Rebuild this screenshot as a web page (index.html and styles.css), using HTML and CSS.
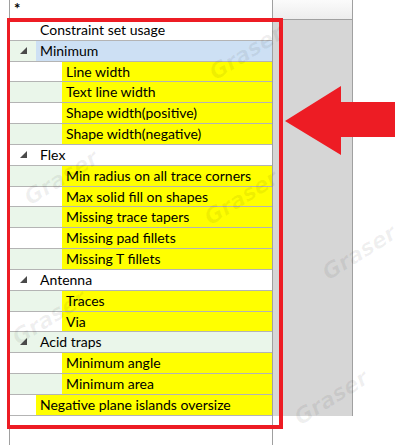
FILE: index.html
```html
<!DOCTYPE html>
<html lang="en">
<head>
  <meta charset="UTF-8">
  <title>Constraint set usage</title>
  <link rel="stylesheet" href="styles.css">
</head>
<body>
  <div class="screen">
    <div class="tree">
      <div class="tree-head">*</div>
      <div class="row"><div class="exp"></div><div class="label">Constraint set usage</div></div>
      <div class="row alt"><div class="exp"><svg class="tri" width="7" height="7"><polygon points="0,7 7,7 7,0"/></svg></div><div class="label sel">Minimum</div></div>
      <div class="row"><div class="exp"></div><div class="indent"></div><div class="label hl">Line width</div></div>
      <div class="row alt"><div class="exp"></div><div class="indent"></div><div class="label hl">Text line width</div></div>
      <div class="row"><div class="exp"></div><div class="indent"></div><div class="label hl">Shape width(positive)</div></div>
      <div class="row alt"><div class="exp"></div><div class="indent"></div><div class="label hl">Shape width(negative)</div></div>
      <div class="row"><div class="exp"><svg class="tri" width="7" height="7"><polygon points="0,7 7,7 7,0"/></svg></div><div class="label">Flex</div></div>
      <div class="row alt"><div class="exp"></div><div class="indent"></div><div class="label hl">Min radius on all trace corners</div></div>
      <div class="row"><div class="exp"></div><div class="indent"></div><div class="label hl">Max solid fill on shapes</div></div>
      <div class="row alt"><div class="exp"></div><div class="indent"></div><div class="label hl">Missing trace tapers</div></div>
      <div class="row"><div class="exp"></div><div class="indent"></div><div class="label hl">Missing pad fillets</div></div>
      <div class="row alt"><div class="exp"></div><div class="indent"></div><div class="label hl">Missing T fillets</div></div>
      <div class="row"><div class="exp"><svg class="tri" width="7" height="7"><polygon points="0,7 7,7 7,0"/></svg></div><div class="label">Antenna</div></div>
      <div class="row alt"><div class="exp"></div><div class="indent"></div><div class="label hl">Traces</div></div>
      <div class="row"><div class="exp"></div><div class="indent"></div><div class="label hl">Via</div></div>
      <div class="row alt"><div class="exp"><svg class="tri" width="7" height="7"><polygon points="0,7 7,7 7,0"/></svg></div><div class="label">Acid traps</div></div>
      <div class="row"><div class="exp"></div><div class="indent"></div><div class="label hl">Minimum angle</div></div>
      <div class="row alt"><div class="exp"></div><div class="indent"></div><div class="label hl">Minimum area</div></div>
      <div class="row"><div class="exp"></div><div class="label hl">Negative plane islands oversize</div></div>
    </div>
    <div class="side">
      <div class="side-head"></div>
      <div class="side-body"></div>
    </div>

    <!-- annotation overlays -->
    <div class="mark-box"></div>
    <svg class="mark-arrow" width="112" height="72" viewBox="284 85 112 72">
      <polygon points="285,121 341,86 341,102 395,102 395,137 341,137 341,155"/>
    </svg>

    <span class="wm" style="left:205px;top:40px">Graser</span>
    <span class="wm" style="left:20px;top:165px">Graser</span>
    <span class="wm" style="left:200px;top:185px">Graser</span>
    <span class="wm" style="left:318px;top:240px">Graser</span>
    <span class="wm" style="left:8px;top:305px">Graser</span>
    <span class="wm" style="left:290px;top:385px">Graser</span>
  </div>
</body>
</html>
```

FILE: styles.css
```css
body {
  margin: 0;
  font-family: Lato, "Noto Sans", sans-serif;
  font-size: 14px;
  color: #000;
  background: #fff;
}
.screen {
  position: relative;
  width: 400px;
  height: 445px;
  overflow: hidden;
  display: flex;
  padding-left: 9px;
  box-sizing: border-box;
}
.tree {
  width: 262px;
  border-left: 1px solid #a0a0a0;
  border-right: 1px solid #a0a0a0;
}
.tree-head {
  height: 17px;
  padding: 2px 0 0 4px;
  border-bottom: 1px solid #a0a0a0;
  font-size: 15px;
  font-weight: bold;
  line-height: 12px;
}
.row {
  display: flex;
  height: 20.84px;
  box-sizing: border-box;
  border-bottom: 1px solid #b4b4b4;
}
.row.alt {
  background: #eaf6ea;
}
.exp {
  width: 26px;
  flex: none;
}
.indent {
  width: 26px;
  flex: none;
}
.tri {
  display: block;
  margin: 6px 0 0 10px;
  fill: #4a4a4a;
}
.label {
  flex: 1;
  padding-left: 4px;
  line-height: 19.84px;
  white-space: nowrap;
  overflow: hidden;
}
.label.sel {
  background: #cde0f4;
}
.label.hl {
  background: #ffff00;
}
.side {
  width: 80px;
}
.side-head {
  height: 19px;
  border-bottom: 1px solid #a0a0a0;
  border-right: 1px solid #a0a0a0;
  background: linear-gradient(#fbfbfb, #ededed);
}
.side-body {
  height: 396px;
  border-right: 1px solid #a0a0a0;
  background: #d6d6d6;
}
.mark-box {
  position: absolute;
  left: 7px;
  top: 18px;
  width: 276px;
  height: 411px;
  border: 4px solid #ed1c24;
  border-left-width: 3px;
  box-sizing: border-box;
}
.mark-arrow {
  position: absolute;
  left: 284px;
  top: 85px;
  fill: #ed1c24;
}
.wm {
  position: absolute;
  font-family: "DejaVu Sans", sans-serif;
  font-style: italic;
  font-weight: bold;
  font-size: 22px;
  color: rgba(0, 0, 0, 0.06);
  transform: rotate(-32deg);
  pointer-events: none;
}
```
